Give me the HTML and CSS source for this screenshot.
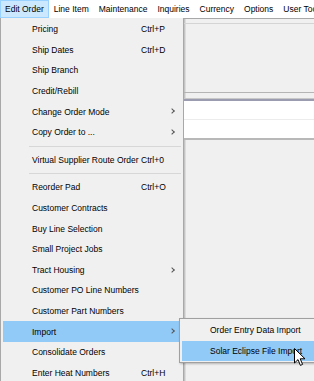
FILE: index.html
```html
<!DOCTYPE html>
<html lang="en">
<head>
    <meta charset="UTF-8">
    <meta name="viewport" content="width=device-width, initial-scale=1.0">
    <title>Edit Order</title>
    <link rel="stylesheet" href="styles.css">
</head>
<body>
    <div class="menubar">
        <div class="menubar-item active">Edit Order</div>
        <div class="menubar-item">Line Item</div>
        <div class="menubar-item">Maintenance</div>
        <div class="menubar-item">Inquiries</div>
        <div class="menubar-item">Currency</div>
        <div class="menubar-item">Options</div>
        <div class="menubar-item">User Tools</div>
    </div>

    <div class="workspace">
        <div class="toolbar-edge"></div>
        <div class="panel-top"></div>
        <div class="panel-rules"></div>
        <div class="grid-panel">
            <div class="grid-row"></div>
            <div class="grid-row"></div>
        </div>
        <div class="panel-bottom"></div>

        <div class="menu">
            <div class="item"><span class="label">Pricing</span><span class="key">Ctrl+P</span></div>
            <div class="item"><span class="label">Ship Dates</span><span class="key">Ctrl+D</span></div>
            <div class="item"><span class="label">Ship Branch</span></div>
            <div class="item"><span class="label">Credit/Rebill</span></div>
            <div class="item sub"><span class="label">Change Order Mode</span></div>
            <div class="item sub"><span class="label">Copy Order to ...</span></div>
            <div class="sep"></div>
            <div class="item"><span class="label">Virtual Supplier Route Order</span><span class="key">Ctrl+0</span></div>
            <div class="sep"></div>
            <div class="item"><span class="label">Reorder Pad</span><span class="key">Ctrl+O</span></div>
            <div class="item"><span class="label">Customer Contracts</span></div>
            <div class="item"><span class="label">Buy Line Selection</span></div>
            <div class="item"><span class="label">Small Project Jobs</span></div>
            <div class="item sub"><span class="label">Tract Housing</span></div>
            <div class="item"><span class="label">Customer PO Line Numbers</span></div>
            <div class="item"><span class="label">Customer Part Numbers</span></div>
            <div class="item sub hover"><span class="label">Import</span></div>
            <div class="item"><span class="label">Consolidate Orders</span></div>
            <div class="item"><span class="label">Enter Heat Numbers</span><span class="key">Ctrl+H</span></div>
        </div>

        <div class="submenu">
            <div class="item"><span class="label">Order Entry Data Import</span></div>
            <div class="item hover"><span class="label">Solar Eclipse File Import</span></div>
        </div>

        <svg class="cursor" width="12" height="19" viewBox="0 0 12 19">
            <path d="M0.5 0.5 L0.5 15 L4 11.6 L6.4 17.4 L8.6 16.4 L6.2 10.8 L11 10.8 Z" fill="#fff" stroke="#000" stroke-width="1"/>
        </svg>
    </div>
</body>
</html>
```

FILE: styles.css
```css
body {
    margin: 0;
    font-family: "Liberation Sans", Arial, sans-serif;
    font-size: 8.5px;
    color: #000;
    background: #f0f0f0;
    width: 314px;
    height: 381px;
    overflow: hidden;
}
.menubar {
    display: flex;
    height: 18px;
    background: #fff;
    white-space: nowrap;
}
.menubar-item {
    display: flex;
    align-items: center;
    padding: 0 4px;
    border: 1px solid transparent;
}
.menubar-item.active {
    background: #cce8ff;
    border-color: #99d1ff;
}
.workspace {
    position: relative;
    height: 363px;
    border-left: 184px solid #f0f0f0;
    box-shadow: inset 1px 0 0 #c4c4c4, inset 2px 0 0 #dcdcdc;
}
.toolbar-edge {
    height: 4px;
    border-top: 1px solid #a8a8a8;
    border-bottom: 1px solid #d4d4d4;
}
.panel-top {
    height: 68px;
}
.panel-rules {
    height: 5px;
    border-top: 1px solid #b4b4b4;
    border-bottom: 1px solid #c8c8c8;
    box-shadow: 0 2px 0 #9c9cb0;
}
.grid-panel {
    margin-top: 2px;
    background: #fff;
}
.grid-row {
    height: 18px;
    border-bottom: 1px solid #ececec;
}
.grid-row:last-child {
    border-bottom: none;
}
.panel-bottom {
    border-top: 2px solid #b8b8b8;
}
.menu {
    position: absolute;
    top: 0;
    left: -184px;
    width: 178px;
    padding: 1px 2px 0;
    background: #f0f0f0;
    border: 1px solid #a8a8a8;
    border-top: none;
    border-bottom: none;
}
.item {
    position: relative;
    display: flex;
    align-items: center;
    height: 20.6px;
    padding-left: 29px;
    white-space: nowrap;
}
.item .label {
    width: 109px;
}
.menu .item.sub::after {
    content: "";
    position: absolute;
    right: 7px;
    top: 8px;
    width: 3px;
    height: 3px;
    border-top: 1px solid #555;
    border-right: 1px solid #555;
    transform: rotate(45deg);
}
.item.hover {
    background: #91c9f7;
}
.sep {
    height: 7px;
    display: flex;
    align-items: center;
    padding-left: 26px;
}
.sep::before {
    content: "";
    flex: 1;
    border-top: 1px solid #d7d7d7;
}
.submenu {
    position: absolute;
    top: 300px;
    left: -5px;
    width: 140px;
    padding: 1px 2px;
    background: #f0f0f0;
    border: 1px solid #a0a0a0;
    box-shadow: 1px 1px 2px rgba(0, 0, 0, 0.25);
}
.submenu .item {
    padding-left: 28px;
}
.submenu .item .label {
    width: auto;
}
.cursor {
    position: absolute;
    top: 330px;
    left: 110px;
}
```
